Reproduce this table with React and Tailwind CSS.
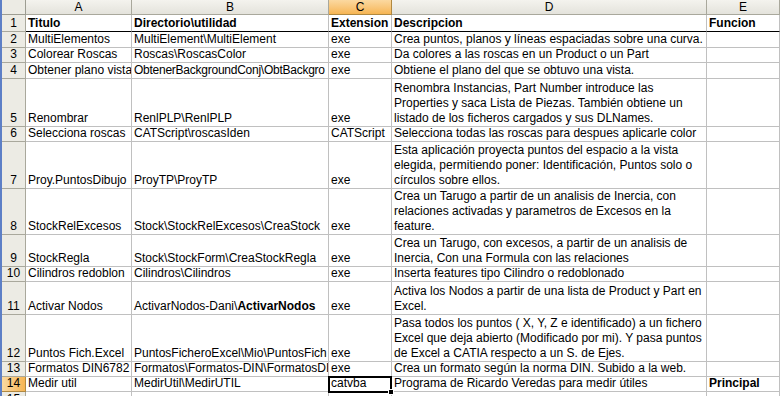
import React from 'react';

// Hoja de Excel con el listado de utilidades CATIA
const rows = [
  { n: 1, h: 'h-[17px]', a: 'Titulo', b: 'Directorio\\utilidad', c: 'Extension', d: ['Descripcion'], e: 'Funcion', head: true },
  { n: 2, h: 'h-[16px]', a: 'MultiElementos', b: 'MultiElement\\MultiElement', c: 'exe', d: ['Crea puntos, planos y líneas espaciadas sobre una curva.'] },
  { n: 3, h: 'h-[15px]', a: 'Colorear Roscas', b: 'Roscas\\RoscasColor', c: 'exe', d: ['Da colores a las roscas en un Product o un Part'] },
  { n: 4, h: 'h-[16px]', a: 'Obtener plano vista', b: 'ObtenerBackgroundConj\\ObtBackgro', bTight: true, c: 'exe', d: ['Obtiene el plano del que se obtuvo una vista.'] },
  {
    n: 5, h: 'h-[48px]', a: 'Renombrar', b: 'RenlPLP\\RenlPLP', c: 'exe',
    d: ['Renombra Instancias, Part Number introduce las', 'Properties y saca Lista de Piezas. También obtiene un', 'listado de los ficheros cargados y sus DLNames.'],
  },
  { n: 6, h: 'h-[15px]', a: 'Selecciona roscas', b: 'CATScript\\roscasIden', c: 'CATScript', d: ['Selecciona todas las roscas para despues aplicarle color'] },
  {
    n: 7, h: 'h-[47px]', a: 'Proy.PuntosDibujo', b: 'ProyTP\\ProyTP', c: 'exe',
    d: ['Esta aplicación proyecta puntos del espacio a la vista', 'elegida, permitiendo poner: Identificación, Puntos solo o', 'círculos sobre ellos.'],
  },
  {
    n: 8, h: 'h-[46px]', a: 'StockRelExcesos', b: 'Stock\\StockRelExcesos\\CreaStock', c: 'exe',
    d: ['Crea un Tarugo a partir de un analisis de Inercia, con', 'relaciones activadas y parametros de Excesos en la', 'feature.'],
  },
  {
    n: 9, h: 'h-[32px]', a: 'StockRegla', b: 'Stock\\StockForm\\CreaStockRegla', c: 'exe',
    d: ['Crea un Tarugo, con excesos, a partir de un analisis de', 'Inercia, Con una Formula con las relaciones'],
  },
  { n: 10, h: 'h-[15px]', a: 'Cilindros redoblon', b: 'Cilindros\\Cilindros', c: 'exe', d: ['Inserta features tipo Cilindro o redoblonado'] },
  {
    n: 11, h: 'h-[33px]', a: 'Activar Nodos', b: 'ActivarNodos-Dani\\', bBold: 'ActivarNodos', c: 'exe',
    d: ['Activa los Nodos a partir de una lista de Product y Part en', 'Excel.'],
  },
  {
    n: 12, h: 'h-[47px]', a: 'Puntos Fich.Excel', b: 'PuntosFicheroExcel\\Mio\\PuntosFich', c: 'exe',
    d: ['Pasa todos los puntos ( X, Y, Z e identificado) a un fichero', 'Excel que deja abierto (Modificado por mi). Y pasa puntos', 'de Excel a CATIA respecto a un S. de Ejes.'],
  },
  { n: 13, h: 'h-[15px]', a: 'Formatos DIN6782', b: 'Formatos\\Formatos-DIN\\FormatosDI', c: 'exe', d: ['Crea un formato según la norma DIN. Subido a la web.'] },
  { n: 14, h: 'h-[15px]', a: 'Medir util', b: 'MedirUtil\\MedirUTIL', c: 'catvba', d: ['Programa de Ricardo Veredas para medir útiles'], e: 'Principal', eBold: true, sel: true },
  { n: 15, h: 'h-[16px]', a: '', b: '', c: '', d: [''] },
];

const Cell = ({ w, children, bold, line, extra = 'overflow-hidden' }) => (
  <div
    className={`${w} h-full shrink-0 whitespace-nowrap border-r border-[#c0c0c0] px-[2px] flex flex-col justify-end ${
      line ? 'border-b border-b-black' : 'border-b border-b-[#c0c0c0]'
    } ${bold ? 'font-bold' : ''} ${extra}`}
  >
    {children}
  </div>
);

export default function App() {
  return (
    <div className="w-[780px] h-[396px] overflow-hidden bg-white flex font-['Liberation_Sans',Arial,sans-serif] text-[12px] leading-[15px] text-black">
      <div className="w-[2px] shrink-0 bg-[#5d7fc6]" />
      <div className="flex-1 flex flex-col">
        {/* Cabecera de columnas */}
        <div className="flex h-[15px] shrink-0">
          <div className="w-[24px] shrink-0 bg-[#ecebe4] border-r border-b border-[#9d9d92]" />
          {[
            ['A', 'w-[106px]'],
            ['B', 'w-[197px]'],
            ['C', 'w-[63px]'],
            ['D', 'w-[315px]'],
            ['E', 'flex-1'],
          ].map(([l, w]) => (
            <div
              key={l}
              className={`${w} shrink-0 text-center leading-[14px] border-r border-b ${
                l === 'C'
                  ? 'bg-gradient-to-b from-[#fbd9a0] to-[#f6b552] border-[#b08840]'
                  : 'bg-gradient-to-b from-[#f4f3ee] to-[#e4e3dc] border-[#a9a89c]'
              }`}
            >
              {l}
            </div>
          ))}
        </div>

        {rows.map((r) => (
          <div key={r.n} className={`flex ${r.h} shrink-0`}>
            <div
              className={`w-[24px] shrink-0 flex items-end justify-center border-r border-b ${
                r.sel
                  ? 'bg-gradient-to-r from-[#fbd9a0] to-[#f6b552] border-[#b08840]'
                  : 'bg-[#ecebe4] border-[#a9a89c]'
              }`}
            >
              {r.n}
            </div>
            <Cell w="w-[106px]" bold={r.head} line={r.head}>{r.a}</Cell>
            <Cell w="w-[197px]" bold={r.head} line={r.head}>
              <span className={r.bTight ? 'tracking-[-0.25px]' : ''}>
                {r.b}
                {r.bBold && <b>{r.bBold}</b>}
              </span>
            </Cell>
            <Cell
              w="w-[63px]"
              bold={r.head}
              line={r.head}
              extra={r.sel ? 'relative overflow-visible' : 'overflow-hidden'}
            >
              {r.c}
              {r.sel && (
                <div className="absolute -left-[1px] -top-[1px] w-[64px] h-[17px] border-2 border-black">
                  <div className="absolute -right-[4px] -bottom-[4px] w-[6px] h-[6px] bg-black border border-white" />
                </div>
              )}
            </Cell>
            <Cell w="w-[315px]" bold={r.head} line={r.head}>
              {r.d.map((t, i) => (
                <div key={i}>{t}</div>
              ))}
            </Cell>
            <Cell w="flex-1" bold={r.head || r.eBold} line={r.head}>{r.e}</Cell>
          </div>
        ))}
      </div>
    </div>
  );
}
